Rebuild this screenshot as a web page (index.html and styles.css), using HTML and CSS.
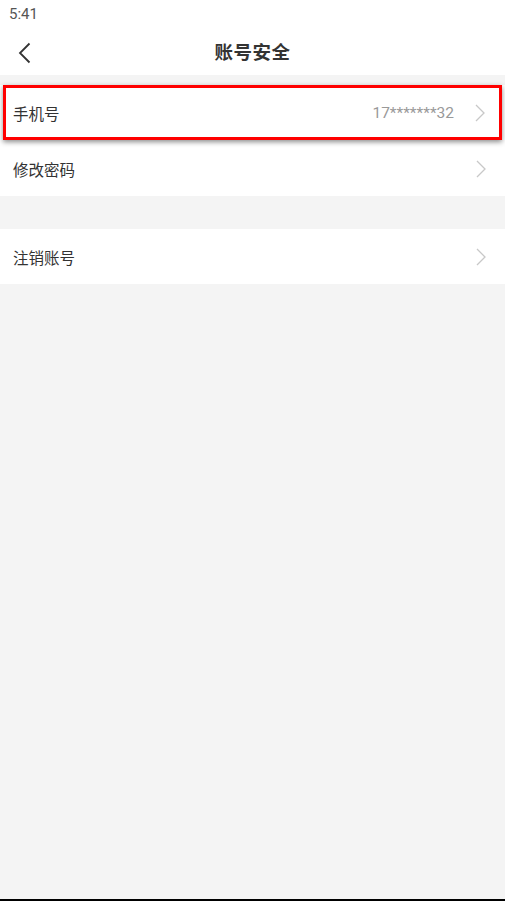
FILE: index.html
```html
<!DOCTYPE html>
<html lang="zh">
<head>
<meta charset="utf-8">
<title>账号安全</title>
<link rel="stylesheet" href="styles.css">
</head>
<body>
<div class="page">
  <div class="status">5:41</div>
  <header class="nav">
    <svg class="back" width="14" height="22" viewBox="0 0 14 22"><path d="M11.5 1.5 L2 11 L11.5 20.5" fill="none" stroke="#333" stroke-width="1.8"/></svg>
    <h1 class="title">账号安全</h1>
  </header>
  <div class="content">
    <div class="group first">
      <div class="row highlight">
        <span class="label">手机号</span>
        <span class="value">17*******32</span>
        <svg class="chev" width="10" height="18" viewBox="0 0 10 18"><path d="M1 1 L9 9 L1 17" fill="none" stroke="#c8c8c8" stroke-width="1.3"/></svg>
      </div>
      <div class="row">
        <span class="label">修改密码</span>
        <svg class="chev" width="10" height="18" viewBox="0 0 10 18"><path d="M1 1 L9 9 L1 17" fill="none" stroke="#c8c8c8" stroke-width="1.3"/></svg>
      </div>
    </div>
    <div class="group">
      <div class="row">
        <span class="label">注销账号</span>
        <svg class="chev" width="10" height="18" viewBox="0 0 10 18"><path d="M1 1 L9 9 L1 17" fill="none" stroke="#c8c8c8" stroke-width="1.3"/></svg>
      </div>
    </div>
  </div>
  <div class="bottom-bar"></div>
</div>
</body>
</html>
```

FILE: styles.css
```css
* { box-sizing: border-box; }
html, body { margin: 0; padding: 0; }
body {
  background: #f4f4f4;
  font-family: Roboto, "Noto Sans CJK SC", "Noto Sans", sans-serif;
  color: #333;
}
.page {
  display: flex;
  flex-direction: column;
  height: 901px;
}
.status {
  background: #fff;
  height: 27px;
  padding: 5px 0 0 9px;
  font-size: 15px;
  line-height: 18px;
  color: #555;
}
.nav {
  background: #fff;
  height: 48px;
  display: flex;
  align-items: center;
  justify-content: center;
  position: relative;
}
.back {
  position: absolute;
  left: 18px;
  top: 15px;
}
.title {
  margin: 0;
  font-size: 18.5px;
  font-weight: bold;
  color: #333;
  letter-spacing: 0.5px;
}
.content {
  flex: 1;
  display: flex;
  flex-direction: column;
}
.group {
  background: #fff;
  margin-top: 33px;
}
.group.first { margin-top: 10px; }
.row {
  height: 55px;
  display: flex;
  align-items: center;
  padding: 0 19px 0 13px;
  font-size: 15.5px;
}
.row .label { flex: 1; color: #333; }
.row .value {
  color: #999;
  font-size: 15.5px;
  margin-right: 21px;
}
.chev { display: block; }
.highlight {
  position: relative;
  margin: 0 3px 1px;
  padding-left: 7px;
  padding-right: 14px;
  border: 3px solid #f00;
  height: 55px;
  box-shadow: 0 2px 5px rgba(0,0,0,0.45);
  z-index: 1;
}
.bottom-bar {
  height: 2px;
  background: #000;
}
```
